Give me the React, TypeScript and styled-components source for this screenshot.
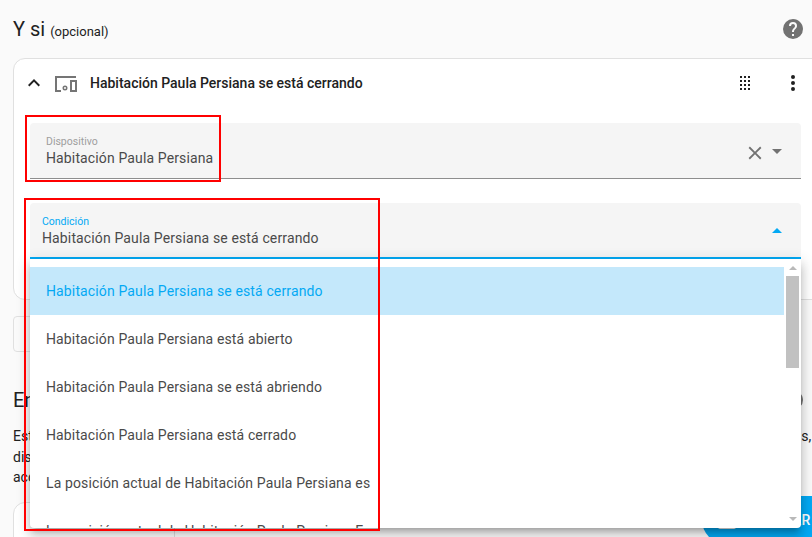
import styled, { createGlobalStyle } from "styled-components";

const GlobalStyle = createGlobalStyle`
  html, body {
    margin: 0;
    height: 100%;
    overflow: hidden;
    background: #fafafa;
    font-family: Roboto, "Liberation Sans", sans-serif;
  }
`;

const Page = styled.div`
  position: relative;
  width: 812px;
  height: 537px;
  overflow: hidden;
  padding: 0 0 0 13px;
  box-sizing: border-box;
`;

const HeadRow = styled.div`
  height: 58px;
  display: flex;
  align-items: center;
  justify-content: space-between;
`;

const Title = styled.h2`
  margin: 0;
  font-size: 20px;
  font-weight: 400;
  color: #212121;

  small {
    font-size: 13px;
    color: #212121;
  }
`;

const HelpDot = styled.svg`
  width: 24px;
  height: 24px;
  margin-right: 7px;
  fill: #727272;
`;

const Card = styled.section`
  width: 812px;
  height: 242px;
  box-sizing: border-box;
  background: #fff;
  border: 1px solid #e0e0e0;
  border-radius: 12px;
`;

const CardHeader = styled.div`
  height: 47px;
  width: 791px;
  padding-left: 8px;
  box-sizing: border-box;
  display: flex;
  align-items: center;
`;

const HeaderText = styled.span`
  font-size: 14px;
  font-weight: 500;
  color: #212121;
  margin-left: 12px;
  flex: 1;
`;

const Icon = styled.svg<{ $size?: number; $color?: string; $gap?: number }>`
  width: ${(p) => p.$size ?? 24}px;
  height: ${(p) => p.$size ?? 24}px;
  fill: ${(p) => p.$color ?? "#212121"};
  margin-left: ${(p) => p.$gap ?? 0}px;
  flex-shrink: 0;
`;

const ClearIcon = styled(Icon)`
  margin-top: 2px;
`;

const Field = styled.div<{ $active?: boolean }>`
  width: 771px;
  height: 56px;
  box-sizing: border-box;
  margin: ${(p) => (p.$active ? 24 : 17)}px 0 0 16px;
  background: #f5f5f5;
  border-radius: 4px 4px 0 0;
  border-bottom: ${(p) => (p.$active ? "2px solid #03a9f4" : "1px solid #8e8e8e")};
  padding: 0 19px 0 ${(p) => (p.$active ? 12 : 16)}px;
  display: flex;
  align-items: center;
  justify-content: space-between;
`;

const FieldText = styled.div`
  align-self: flex-start;
  padding-top: 12px;
  display: flex;
  flex-direction: column;
`;

const FieldLabel = styled.label<{ $active?: boolean }>`
  font-size: 10.5px;
  line-height: 13px;
  color: ${(p) => (p.$active ? "#03a9f4" : "#9e9e9e")};
`;

const FieldValue = styled.span`
  font-size: 14px;
  line-height: 20px;
  letter-spacing: 0.13px;
  color: #4a4a4a;
`;

const FieldIcons = styled.div`
  display: flex;
  align-items: center;
  gap: 6px;
  margin-top: 2px;
`;

const Caret = styled.span<{ $up?: boolean }>`
  width: 0;
  height: 0;
  border-left: 5px solid transparent;
  border-right: 5px solid transparent;
  border-top: ${(p) => (p.$up ? "none" : "5px solid #727272")};
  border-bottom: ${(p) => (p.$up ? "5px solid #03a9f4" : "none")};
`;

const AddButton = styled.div`
  width: 120px;
  height: 36px;
  box-sizing: border-box;
  margin-top: 16px;
  border: 1px solid #e0e0e0;
  border-radius: 4px;
`;

const SectionHead = styled.div`
  margin-top: 36px;
  height: 24px;
  display: flex;
  align-items: center;
  justify-content: space-between;
`;

const Paragraph = styled.p`
  margin: 14px 0 0;
  font-size: 14px;
  line-height: 20.5px;
  white-space: nowrap;
  color: #212121;
`;

const LowerCard = styled.div`
  width: 812px;
  height: 80px;
  box-sizing: border-box;
  margin-top: 14px;
  background: #fff;
  border: 1px solid #e0e0e0;
  border-radius: 12px;
`;

const LowerCardCell = styled.div`
  width: 160px;
  height: 100%;
  border-right: 1px solid #e0e0e0;
`;

const SaveFab = styled.button`
  position: absolute;
  left: 702px;
  top: 496px;
  width: 150px;
  height: 48px;
  padding: 0 0 0 13px;
  border: none;
  border-radius: 24px;
  background: #03a9f4;
  color: #fff;
  font: 500 14px Roboto, sans-serif;
  letter-spacing: 0.6px;
  display: flex;
  align-items: center;
  gap: 4px;
`;

const Menu = styled.div`
  position: absolute;
  left: 30px;
  top: 259px;
  width: 771px;
  height: 269px;
  box-sizing: border-box;
  padding-top: 8px;
  display: flex;
  background: #fff;
  border-radius: 0 0 4px 4px;
  overflow: hidden;
  box-shadow: 0 5px 5px -3px rgba(0, 0, 0, 0.2), 0 8px 10px 1px rgba(0, 0, 0, 0.14), 0 3px 14px 2px rgba(0, 0, 0, 0.12);
`;

const OptionList = styled.ul`
  flex: 1;
  margin: 0;
  padding: 0;
  list-style: none;
`;

const Option = styled.li<{ $selected?: boolean }>`
  height: 48px;
  display: flex;
  align-items: center;
  padding-left: 16px;
  font-size: 14px;
  letter-spacing: 0.13px;
  color: ${(p) => (p.$selected ? "#03a9f4" : "#4a4a4a")};
  background: ${(p) => (p.$selected ? "#c4e8fb" : "transparent")};
`;

const Scrollbar = styled.div`
  width: 17px;
  margin-top: -8px;
  display: flex;
  flex-direction: column;
  align-items: center;
`;

const ScrollArrow = styled.span<{ $down?: boolean }>`
  width: 0;
  height: 0;
  margin: ${(p) => (p.$down ? "4px 0 7px" : "7px 0 4px")};
  border-left: 4px solid transparent;
  border-right: 4px solid transparent;
  border-top: ${(p) => (p.$down ? "4px solid #b9b9b9" : "none")};
  border-bottom: ${(p) => (p.$down ? "none" : "4px solid #b9b9b9")};
`;

const ScrollThumb = styled.div`
  width: 13px;
  height: 92px;
  background: #c1c1c1;
  margin-top: 2px;
  margin-bottom: auto;
`;

const Callout = styled.div<{ $x: number; $y: number; $w: number; $h: number }>`
  position: absolute;
  left: ${(p) => p.$x}px;
  top: ${(p) => p.$y}px;
  width: ${(p) => p.$w}px;
  height: ${(p) => p.$h}px;
  box-sizing: border-box;
  border: 2px solid #ff0000;
  pointer-events: none;
`;

const options = [
  "Habitación Paula Persiana se está cerrando",
  "Habitación Paula Persiana está abierto",
  "Habitación Paula Persiana se está abriendo",
  "Habitación Paula Persiana está cerrado",
  "La posición actual de Habitación Paula Persiana es",
  "La posición actual de Habitación Paula Persiana Es",
];

const helpPath =
  "M15.07,11.25L14.17,12.17C13.45,12.89 13,13.5 13,15H11V14.5C11,13.39 11.45,12.39 12.17,11.67L13.41,10.41C13.78,10.05 14,9.55 14,9C14,7.89 13.1,7 12,7A2,2 0 0,0 10,9H8A4,4 0 0,1 12,5A4,4 0 0,1 16,9C16,9.88 15.64,10.67 15.07,11.25M13,19H11V17H13M12,2A10,10 0 0,0 2,12A10,10 0 0,0 12,22A10,10 0 0,0 22,12C22,6.47 17.5,2 12,2Z";

export default function App() {
  return (
    <>
      <GlobalStyle />
      <Page>
        <HeadRow>
          <Title>
            Y si <small>(opcional)</small>
          </Title>
          <HelpDot viewBox="0 0 24 24">
            <path d={helpPath} />
          </HelpDot>
        </HeadRow>

        <Card>
          <CardHeader>
            <Icon viewBox="0 0 24 24">
              <path d="M7.41,15.41L12,10.83L16.59,15.41L18,14L12,8L6,14L7.41,15.41Z" />
            </Icon>
            <Icon viewBox="0 0 24 24" $color="#757575" $gap={8}>
              <path
                fillRule="evenodd"
                d="M1,5H22V7H3V19H7V21H1ZM16,9H23V21H16ZM18,11V19H21V11ZM11,14.5A2.5,2.5 0 1,1 11,19.5A2.5,2.5 0 1,1 11,14.5ZM11,16A1,1 0 1,0 11,18A1,1 0 1,0 11,16Z"
              />
            </Icon>
            <HeaderText>Habitación Paula Persiana se está cerrando</HeaderText>
            <Icon viewBox="0 0 24 24">
              <path d="M7,5H9V7H7ZM11,5H13V7H11ZM15,5H17V7H15ZM7,9H9V11H7ZM11,9H13V11H11ZM15,9H17V11H15ZM7,13H9V15H7ZM11,13H13V15H11ZM15,13H17V15H15ZM7,17H9V19H7ZM11,17H13V19H11ZM15,17H17V19H15Z" />
            </Icon>
            <Icon viewBox="0 0 24 24" $gap={24}>
              <path d="M12,16A2,2 0 0,1 14,18A2,2 0 0,1 12,20A2,2 0 0,1 10,18A2,2 0 0,1 12,16M12,10A2,2 0 0,1 14,12A2,2 0 0,1 12,14A2,2 0 0,1 10,12A2,2 0 0,1 12,10M12,4A2,2 0 0,1 14,6A2,2 0 0,1 12,8A2,2 0 0,1 10,6A2,2 0 0,1 12,4Z" />
            </Icon>
          </CardHeader>

          <Field>
            <FieldText>
              <FieldLabel>Dispositivo</FieldLabel>
              <FieldValue>Habitación Paula Persiana</FieldValue>
            </FieldText>
            <FieldIcons>
              <ClearIcon viewBox="0 0 24 24" $size={22} $color="#727272">
                <path d="M19,6.41L17.59,5L12,10.59L6.41,5L5,6.41L10.59,12L5,17.59L6.41,19L12,13.41L17.59,19L19,17.59L13.41,12L19,6.41Z" />
              </ClearIcon>
              <Caret />
            </FieldIcons>
          </Field>

          <Field $active>
            <FieldText>
              <FieldLabel $active>Condición</FieldLabel>
              <FieldValue>Habitación Paula Persiana se está cerrando</FieldValue>
            </FieldText>
            <Caret $up />
          </Field>
        </Card>

        <AddButton />

        <SectionHead>
          <Title>Entonces</Title>
          <HelpDot viewBox="0 0 24 24">
            <path d={helpPath} />
          </HelpDot>
        </SectionHead>

        <Paragraph>
          Estas son las acciones que se ejecutan cuando se activa la automatización, y pueden ser de muchas formas realmente distintas,
          <br />
          dispositivos, escenas o servicios que se llaman uno tras otro
          <br />
          acciones
        </Paragraph>

        <LowerCard>
          <LowerCardCell />
        </LowerCard>

        <SaveFab>
          <Icon viewBox="0 0 24 24" $color="#fff">
            <path d="M15,9H5V5H15M12,19A3,3 0 0,1 9,16A3,3 0 0,1 12,13A3,3 0 0,1 15,16A3,3 0 0,1 12,19M17,3H5C3.89,3 3,3.9 3,5V19A2,2 0 0,0 5,21H19A2,2 0 0,0 21,19V7L17,3Z" />
          </Icon>
          GUARDAR
        </SaveFab>

        <Menu>
          <OptionList>
            {options.map((text, i) => (
              <Option key={text} $selected={i === 0}>
                {text}
              </Option>
            ))}
          </OptionList>
          <Scrollbar>
            <ScrollArrow />
            <ScrollThumb />
            <ScrollArrow $down />
          </Scrollbar>
        </Menu>

        <Callout $x={25} $y={115} $w={196} $h={67} />
        <Callout $x={24} $y={198} $w={356} $h={333} />
      </Page>
    </>
  );
}
